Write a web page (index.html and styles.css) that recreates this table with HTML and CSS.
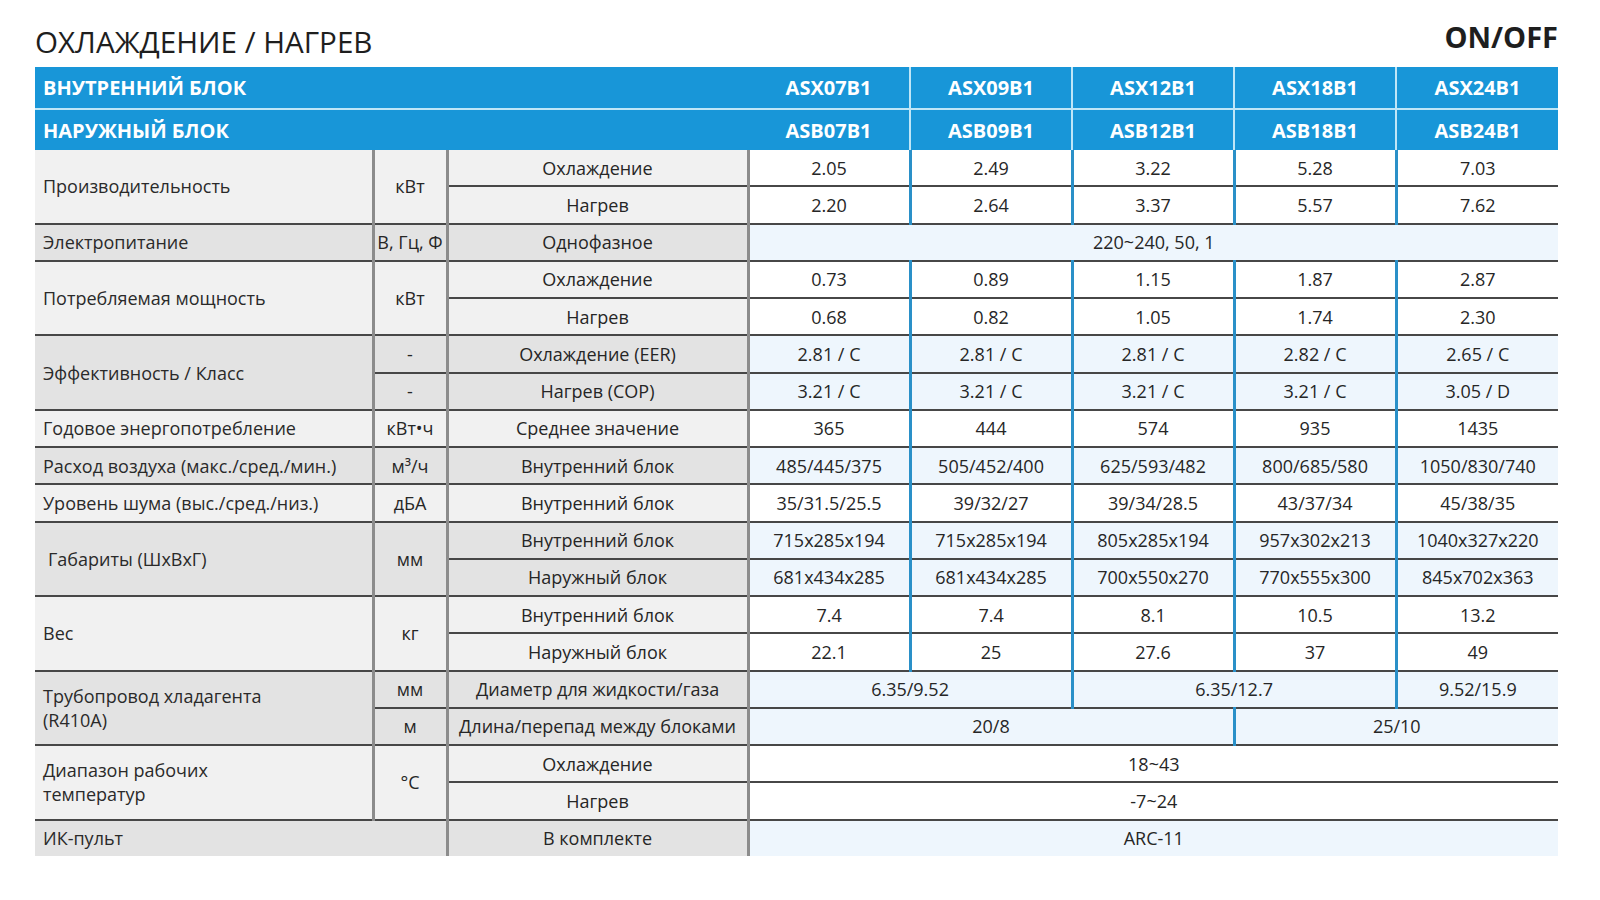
FILE: index.html
```html
<!DOCTYPE html>
<html lang="ru">
<head>
<meta charset="utf-8">
<title>Охлаждение / Нагрев</title>
<link rel="stylesheet" href="styles.css">
</head>
<body>
<div class="page">
  <div class="title-bar">
    <h1 class="title">ОХЛАЖДЕНИЕ / НАГРЕВ</h1>
    <div class="mode">ON/OFF</div>
  </div>
  <table class="spec">
    <colgroup>
      <col class="c-name"><col class="c-unit"><col class="c-param">
      <col class="c-val"><col class="c-val"><col class="c-val"><col class="c-val"><col class="c-val">
    </colgroup>
    <thead>
      <tr class="hr1">
        <th colspan="3" class="h-label">ВНУТРЕННИЙ БЛОК</th>
        <th class="h-first">ASX07B1</th><th>ASX09B1</th><th>ASX12B1</th><th>ASX18B1</th><th>ASX24B1</th>
      </tr>
      <tr class="hr2">
        <th colspan="3" class="h-label">НАРУЖНЫЙ БЛОК</th>
        <th class="h-first">ASB07B1</th><th>ASB09B1</th><th>ASB12B1</th><th>ASB18B1</th><th>ASB24B1</th>
      </tr>
    </thead>
    <tbody class="light first">
      <tr>
        <td rowspan="2" class="name">Производительность</td>
        <td rowspan="2" class="unit">кВт</td>
        <td class="param">Охлаждение</td>
        <td class="v">2.05</td><td class="v">2.49</td><td class="v">3.22</td><td class="v">5.28</td><td class="v last">7.03</td>
      </tr>
      <tr class="sub">
        <td class="param">Нагрев</td>
        <td class="v">2.20</td><td class="v">2.64</td><td class="v">3.37</td><td class="v">5.57</td><td class="v last">7.62</td>
      </tr>
    </tbody>
    <tbody class="dark">
      <tr>
        <td class="name">Электропитание</td>
        <td class="unit">В, Гц, Ф</td>
        <td class="param">Однофазное</td>
        <td class="v last" colspan="5">220~240, 50, 1</td>
      </tr>
    </tbody>
    <tbody class="light">
      <tr>
        <td rowspan="2" class="name">Потребляемая мощность</td>
        <td rowspan="2" class="unit">кВт</td>
        <td class="param">Охлаждение</td>
        <td class="v">0.73</td><td class="v">0.89</td><td class="v">1.15</td><td class="v">1.87</td><td class="v last">2.87</td>
      </tr>
      <tr class="sub">
        <td class="param">Нагрев</td>
        <td class="v">0.68</td><td class="v">0.82</td><td class="v">1.05</td><td class="v">1.74</td><td class="v last">2.30</td>
      </tr>
    </tbody>
    <tbody class="dark">
      <tr>
        <td rowspan="2" class="name">Эффективность / Класс</td>
        <td class="unit">-</td>
        <td class="param">Охлаждение (EER)</td>
        <td class="v">2.81 / C</td><td class="v">2.81 / C</td><td class="v">2.81 / C</td><td class="v">2.82 / C</td><td class="v last">2.65 / C</td>
      </tr>
      <tr class="sub">
        <td class="unit">-</td>
        <td class="param">Нагрев (COP)</td>
        <td class="v">3.21 / C</td><td class="v">3.21 / C</td><td class="v">3.21 / C</td><td class="v">3.21 / C</td><td class="v last">3.05 / D</td>
      </tr>
    </tbody>
    <tbody class="light">
      <tr>
        <td class="name">Годовое энергопотребление</td>
        <td class="unit">кВт•ч</td>
        <td class="param">Среднее значение</td>
        <td class="v">365</td><td class="v">444</td><td class="v">574</td><td class="v">935</td><td class="v last">1435</td>
      </tr>
    </tbody>
    <tbody class="dark">
      <tr>
        <td class="name">Расход воздуха (макс./сред./мин.)</td>
        <td class="unit">м³/ч</td>
        <td class="param">Внутренний блок</td>
        <td class="v">485/445/375</td><td class="v">505/452/400</td><td class="v">625/593/482</td><td class="v">800/685/580</td><td class="v last">1050/830/740</td>
      </tr>
    </tbody>
    <tbody class="light">
      <tr>
        <td class="name">Уровень шума (выс./сред./низ.)</td>
        <td class="unit">дБА</td>
        <td class="param">Внутренний блок</td>
        <td class="v">35/31.5/25.5</td><td class="v">39/32/27</td><td class="v">39/34/28.5</td><td class="v">43/37/34</td><td class="v last">45/38/35</td>
      </tr>
    </tbody>
    <tbody class="dark">
      <tr>
        <td rowspan="2" class="name indent">Габариты (ШхВхГ)</td>
        <td rowspan="2" class="unit">мм</td>
        <td class="param">Внутренний блок</td>
        <td class="v">715x285x194</td><td class="v">715x285x194</td><td class="v">805x285x194</td><td class="v">957x302x213</td><td class="v last">1040x327x220</td>
      </tr>
      <tr class="sub">
        <td class="param">Наружный блок</td>
        <td class="v">681x434x285</td><td class="v">681x434x285</td><td class="v">700x550x270</td><td class="v">770x555x300</td><td class="v last">845x702x363</td>
      </tr>
    </tbody>
    <tbody class="light">
      <tr>
        <td rowspan="2" class="name">Вес</td>
        <td rowspan="2" class="unit">кг</td>
        <td class="param">Внутренний блок</td>
        <td class="v">7.4</td><td class="v">7.4</td><td class="v">8.1</td><td class="v">10.5</td><td class="v last">13.2</td>
      </tr>
      <tr class="sub">
        <td class="param">Наружный блок</td>
        <td class="v">22.1</td><td class="v">25</td><td class="v">27.6</td><td class="v">37</td><td class="v last">49</td>
      </tr>
    </tbody>
    <tbody class="dark">
      <tr>
        <td rowspan="2" class="name">Трубопровод хладагента<br>(R410A)</td>
        <td class="unit">мм</td>
        <td class="param">Диаметр для жидкости/газа</td>
        <td class="v" colspan="2">6.35/9.52</td><td class="v" colspan="2">6.35/12.7</td><td class="v last">9.52/15.9</td>
      </tr>
      <tr class="sub">
        <td class="unit">м</td>
        <td class="param">Длина/перепад между блоками</td>
        <td class="v" colspan="3">20/8</td><td class="v last" colspan="2">25/10</td>
      </tr>
    </tbody>
    <tbody class="light">
      <tr>
        <td rowspan="2" class="name">Диапазон рабочих<br>температур</td>
        <td rowspan="2" class="unit">°C</td>
        <td class="param">Охлаждение</td>
        <td class="v last" colspan="5">18~43</td>
      </tr>
      <tr class="sub">
        <td class="param">Нагрев</td>
        <td class="v last" colspan="5">-7~24</td>
      </tr>
    </tbody>
    <tbody class="dark">
      <tr>
        <td colspan="2" class="name">ИК-пульт</td>
        <td class="param">В комплекте</td>
        <td class="v last" colspan="5">ARC-11</td>
      </tr>
    </tbody>
  </table>
</div>
</body>
</html>
```

FILE: styles.css
```css
html, body {
  margin: 0;
  padding: 0;
  background: #ffffff;
}

body {
  font-family: "Open Sans", "Noto Sans", "Liberation Sans", sans-serif;
  color: #222222;
}

.page {
  width: 1523px;
  padding-left: 35px;
}

.title-bar {
  display: flex;
  justify-content: space-between;
  align-items: flex-start;
  height: 67px;
}

.title {
  margin: 0;
  padding-top: 25px;
  font-size: 29.6px;
  line-height: 34px;
  font-weight: 400;
  color: #1e1e1e;
  letter-spacing: 0;
}

.mode {
  padding-top: 20px;
  font-size: 29px;
  line-height: 34px;
  font-weight: 700;
  color: #1e1e1e;
}

.spec {
  width: 1523px;
  table-layout: fixed;
  border-collapse: collapse;
  border-spacing: 0;
}

.c-name { width: 338px; }
.c-unit { width: 74px; }
.c-param { width: 301px; }
.c-val { width: 162px; }

/* header */
.spec thead th {
  background: #1896d8;
  color: #ffffff;
  font-weight: 700;
  font-size: 20px;
  padding: 0;
  text-align: center;
  border-left: 2px solid #bfe6f7;
}

.spec thead .hr1 th { height: 41px; }
.spec thead .hr2 th {
  height: 40px;
  border-top: 2px solid #bfe6f7;
}

.spec thead th.h-label {
  text-align: left;
  padding-left: 8px;
  border-left: none;
}

.spec thead th.h-first { border-left: none; }

/* body */
.spec tbody td {
  padding: 0;
  height: 35.25px;
  font-size: 18px;
  line-height: 24px;
  text-align: center;
  border-top: 2px solid #474747;
  color: #262626;
}

.spec tbody.first tr:first-child td { border-top: none; }

.spec td.name {
  text-align: left;
  padding-left: 8px;
  border-right: 3px solid #8c8c8c;
  color: #2a2a2a;
}

.spec td.name.indent { padding-left: 13px; }

.spec td.unit {
  border-right: 3px solid #8c8c8c;
}

.spec td.param {
  border-right: 3px solid #8c8c8c;
}

.spec td.v {
  border-right: 3px solid #2a90c8;
}

.spec td.v.last { border-right: none; }

.light td.name,
.light td.unit,
.light td.param { background: #f1f1f1; }

.dark td.name,
.dark td.unit,
.dark td.param { background: #e3e3e3; }

.light td.v { background: #ffffff; }
.dark td.v { background: #eef6fd; }
```
